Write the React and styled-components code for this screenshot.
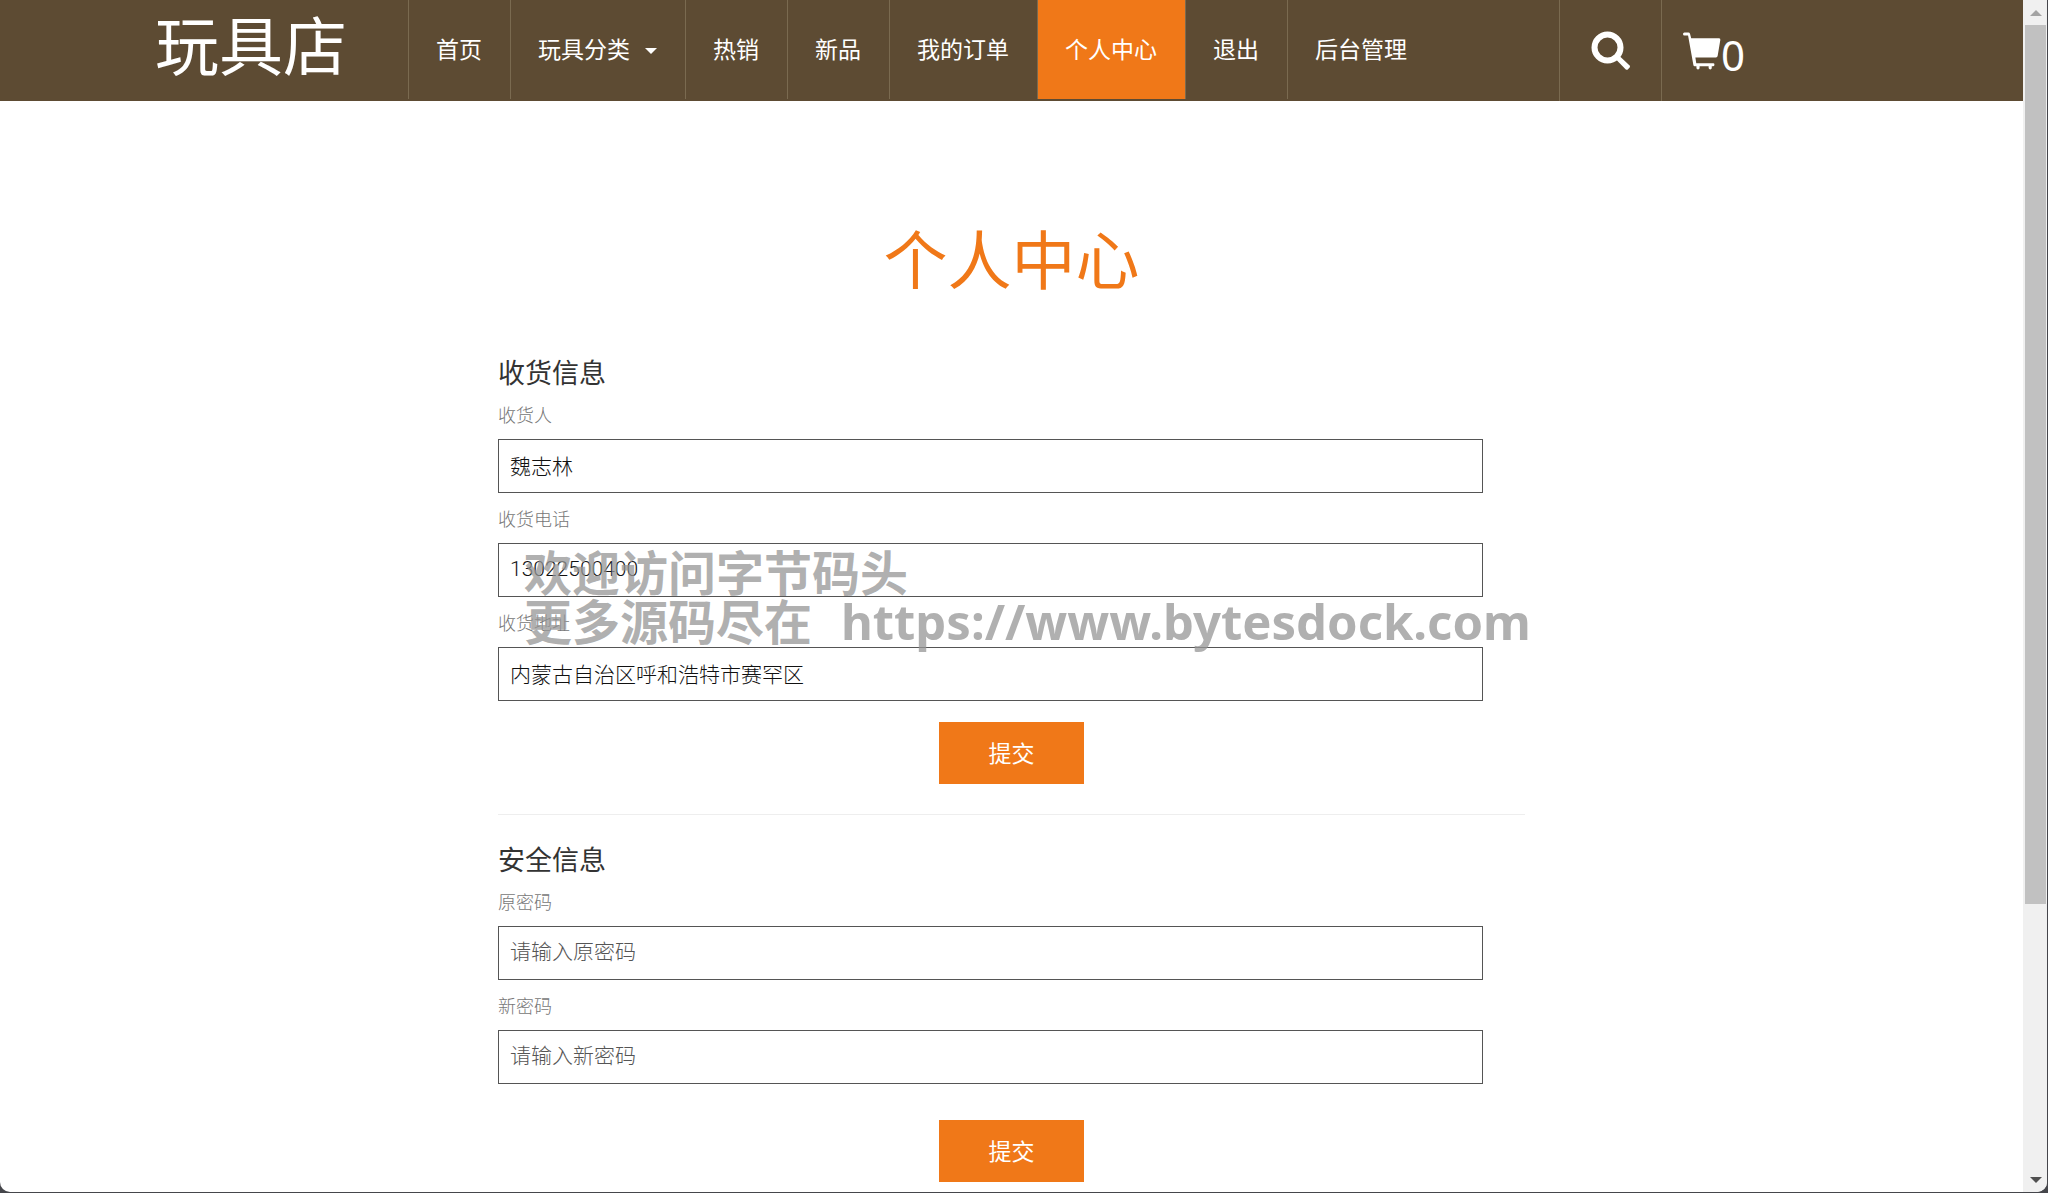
import React, { useState } from "react";
import styled, { createGlobalStyle } from "styled-components";

const menu = [
  { label: "首页" },
  { label: "玩具分类", dropdown: true },
  { label: "热销" },
  { label: "新品" },
  { label: "我的订单" },
  { label: "个人中心", active: true },
  { label: "退出" },
  { label: "后台管理" },
];

const SearchIcon = () => (
  <svg width="40" height="40" viewBox="0 0 40 40" aria-hidden="true">
    <circle cx="16.5" cy="16.5" r="13" fill="none" stroke="#fff" strokeWidth="6" />
    <path d="M25 28.500L28.500 25L38.600 34.600Q39.500 35.600 38.600 36.600L36.800 38.400Q35.800 39.300 34.800 38.400Z" fill="#fff" />
  </svg>
);

const CartIcon = () => (
  <svg width="38" height="40" viewBox="0 0 39 40" aria-hidden="true">
    <path
      d="M1.500 1H5.600Q6.800 1 7.200 2.200L8.400 7H37Q38.600 7 38.300 8.600L35.600 25Q35.300 26.600 33.800 26.600H12.700L13.600 32.600H31Q32.300 32.600 32.300 34T31 35.600H29.500V37.500Q29.500 39 28 39T26.300 37.500V35.600H17V37.500Q17 39 15.400 39T13.800 37.500V35.600H12Q10.900 35.600 10.700 34.500L5.200 4.200H1.500Q0 4.200 0 2.600T1.500 1Z"
      fill="#fff"
    />
  </svg>
);

const Field = ({ id, label, value, ...rest }) => {
  const [text, setText] = useState(value || "");
  return (
    <>
      <Label htmlFor={id}>{label}</Label>
      <Input
        id={id}
        value={text}
        onChange={(ev) => setText(ev.target.value)}
        {...rest}
      />
    </>
  );
};

const App = () => {
  const handleSubmit = (ev) => ev.preventDefault();

  return (
    <>
      <GlobalStyle />
      <Window>
        <Page>
          <Header>
            <HeaderInner>
              <Logo href="#">玩具店</Logo>
              <Nav>
                {menu.map((item) => (
                  <NavItem
                    key={item.label}
                    as={item.dropdown ? "button" : "a"}
                    href={item.dropdown ? undefined : "#"}
                    $active={item.active}
                  >
                    {item.label}
                    {item.dropdown && <Caret />}
                  </NavItem>
                ))}
              </Nav>
              <Tools>
                <SearchButton aria-label="搜索">
                  <SearchIcon />
                </SearchButton>
                <CartLink href="#">
                  <CartIcon />
                  <span>0</span>
                </CartLink>
              </Tools>
            </HeaderInner>
          </Header>
          <Main>
            <Title>个人中心</Title>
            <Form onSubmit={handleSubmit}>
              <Subtitle>收货信息</Subtitle>
              <Field id="name" label="收货人" value="魏志林" />
              <Field id="phone" label="收货电话" value="13022500400" />
              <Field
                id="address"
                label="收货地址"
                value="内蒙古自治区呼和浩特市赛罕区"
              />
              <Submit type="submit">提交</Submit>
            </Form>
            <Divider />
            <Form onSubmit={handleSubmit}>
              <Subtitle>安全信息</Subtitle>
              <Field
                id="password"
                label="原密码"
                type="password"
                placeholder="请输入原密码"
              />
              <Field
                id="newPassword"
                label="新密码"
                type="password"
                placeholder="请输入新密码"
              />
              <Submit type="submit" $spaced>
                提交
              </Submit>
            </Form>
            <Watermark>
              欢迎访问字节码头
              <br />
              更多源码尽在&nbsp; <Url>https://www.bytesdock.com</Url>
            </Watermark>
          </Main>
        </Page>
        <Scrollbar>
          <Arrow $up />
          <Track>
            <Thumb />
          </Track>
          <Arrow />
        </Scrollbar>
      </Window>
    </>
  );
};

const GlobalStyle = createGlobalStyle`
  * {
    box-sizing: border-box;
  }

  body {
    margin: 0;
    background: #45464b;
    font-family: Roboto, "Noto Sans CJK SC", sans-serif;
    color: #333;
  }

  button,
  input {
    font-family: inherit;
  }
`;

const Window = styled.div`
  display: flex;
  height: calc(100vh - 1px);
  margin-right: 1px;
  overflow: hidden;
  background: #fff;
  border-radius: 0 0 10px 10px;
`;

const Page = styled.div`
  flex: 1;
  min-width: 0;
  overflow-y: auto;
  scrollbar-width: none;
`;

const Header = styled.header`
  height: 101px;
  background: #5d4b33;
`;

const HeaderInner = styled.div`
  display: flex;
  height: 100%;
  max-width: 1755px;
  margin: 0 auto;
  padding: 0 21px;
`;

const Logo = styled.a`
  width: 253px;
  font-size: 64px;
  line-height: 98px;
  color: #fff;
  text-decoration: none;
`;

const Nav = styled.nav`
  display: flex;
  flex: 1;
  height: 99px;
`;

const NavItem = styled.a`
  display: flex;
  align-items: center;
  padding: 2px 28px 0 27px;
  border: 0;
  border-left: 1px solid #7a6a50;
  background: ${(props) => (props.$active ? "#f07818" : "transparent")};
  font-size: 23px;
  line-height: 32px;
  color: #fff;
  text-decoration: none;
  white-space: nowrap;
`;

const Caret = styled.span`
  margin-left: 15px;
  border: 6px solid transparent;
  border-top-color: #fff;
  border-bottom: 0;
`;

const Tools = styled.div`
  display: flex;
  width: 309px;
`;

const SearchButton = styled.button`
  display: flex;
  align-items: center;
  justify-content: center;
  width: 102px;
  padding: 0;
  border: 0;
  border-left: 1px solid #7a6a50;
  background: transparent;
`;

const CartLink = styled.a`
  display: flex;
  flex: 1;
  align-items: center;
  padding-left: 21px;
  border-left: 1px solid #7a6a50;
  font-family: "Noto Sans", sans-serif;
  font-size: 42px;
  line-height: 48px;
  color: #fff;
  text-decoration: none;

  span {
    padding-top: 8px;
  }
`;

const Main = styled.main`
  position: relative;
  max-width: 1027px;
  margin: 0 auto;
  padding-top: 117px;
`;

const Title = styled.h1`
  margin: 0 0 50px;
  font-size: 64px;
  font-weight: 400;
  line-height: 90px;
  text-align: center;
  color: #f07818;
`;

const Form = styled.form`
  display: flex;
  flex-direction: column;
  align-items: flex-start;
`;

const Subtitle = styled.h2`
  margin: 0 0 11px;
  font-size: 27px;
  font-weight: 400;
  line-height: 32px;
`;

const Label = styled.label`
  margin-bottom: 8px;
  font-size: 18px;
  font-weight: 300;
  line-height: 30px;
  color: #777;
`;

const Input = styled.input`
  width: calc(100% - 42px);
  height: 54px;
  margin-bottom: 12px;
  padding: 0 11px 2px;
  border: 1px solid #555;
  border-radius: 0;
  font-size: 21px;
  font-weight: 300;
  color: #111;
  outline: none;

  &::placeholder {
    color: #555;
  }
`;

const Submit = styled.button`
  align-self: center;
  width: 145px;
  height: 62px;
  margin-top: ${(props) => (props.$spaced ? "24px" : "9px")};
  padding: 0 0 2px;
  border: 0;
  background: #f07818;
  font-size: 23px;
  color: #fff;
`;

const Divider = styled.hr`
  margin: 30px 0;
  border: 0;
  border-top: 1px solid #eee;
`;

// sits over the form without blocking it
const Watermark = styled.div`
  position: absolute;
  top: 448px;
  left: 26px;
  font-family: "Noto Sans", "Noto Sans CJK SC", sans-serif;
  font-size: 48px;
  font-weight: 700;
  line-height: 48px;
  color: rgba(150, 150, 150, 0.75);
  white-space: nowrap;
  pointer-events: none;
`;

const Url = styled.span`
  margin-left: 4px;
  font-size: 49px;
`;

const Scrollbar = styled.div`
  display: flex;
  flex-direction: column;
  width: 24px;
  padding-left: 2px;
  background: #f0f0f0;
`;

const Arrow = styled.div`
  display: flex;
  align-items: center;
  justify-content: center;
  height: 25px;

  &::before {
    content: "";
    border: 6px solid transparent;
    ${(props) =>
      props.$up
        ? "border-top: 0; border-bottom-color: #a3a3a3;"
        : "border-bottom: 0; border-top-color: #505050;"}
  }
`;

const Track = styled.div`
  flex: 1;
`;

const Thumb = styled.div`
  width: 21px;
  height: 77%;
  background: #c1c1c1;
`;

export default App;
